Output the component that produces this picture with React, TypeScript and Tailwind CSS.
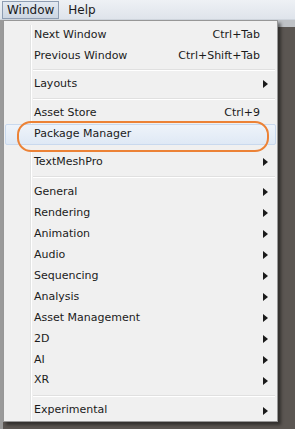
import React from 'react'

type Item =
  | { kind: 'item'; label: string; shortcut?: string; sub?: boolean; active?: boolean; cls?: string }
  | { kind: 'sep'; cls: string }

const items: Item[] = [
  { kind: 'item', label: 'Next Window', shortcut: 'Ctrl+Tab' },
  { kind: 'item', label: 'Previous Window', shortcut: 'Ctrl+Shift+Tab' },
  { kind: 'sep', cls: 'h-[7px]' },
  { kind: 'item', label: 'Layouts', sub: true },
  { kind: 'sep', cls: 'h-[8px]' },
  { kind: 'item', label: 'Asset Store', shortcut: 'Ctrl+9' },
  { kind: 'item', label: 'Package Manager', active: true },
  { kind: 'item', label: 'TextMeshPro', sub: true, cls: 'mt-[7px]' },
  { kind: 'sep', cls: 'h-[9px]' },
  { kind: 'item', label: 'General', sub: true },
  { kind: 'item', label: 'Rendering', sub: true },
  { kind: 'item', label: 'Animation', sub: true },
  { kind: 'item', label: 'Audio', sub: true },
  { kind: 'item', label: 'Sequencing', sub: true },
  { kind: 'item', label: 'Analysis', sub: true },
  { kind: 'item', label: 'Asset Management', sub: true },
  { kind: 'item', label: '2D', sub: true },
  { kind: 'item', label: 'AI', sub: true },
  { kind: 'item', label: 'XR', sub: true },
  { kind: 'sep', cls: 'h-[9px]' },
  { kind: 'item', label: 'Experimental', sub: true },
]

function Arrow() {
  return (
    <svg width="5" height="8" viewBox="0 0 5 8" className="ml-auto mr-[9px] shrink-0">
      <polygon points="0,0 5,4 0,8" fill="#1a1a1a" />
    </svg>
  )
}

function MenuRow({ it }: { it: Item }) {
  if (it.kind === 'sep') {
    return (
      <div className={`flex ${it.cls}`}>
        <div className="w-[27px] shrink-0 border-r border-[#e2e3e3]" />
        <div className="flex-1 flex flex-col justify-center pl-[1px] pr-[2px] border-l border-white">
          <div className="h-px bg-[#e0e0e0]" />
          <div className="h-px bg-white" />
        </div>
      </div>
    )
  }
  if (it.active) {
    return (
      <div className="h-[21px] mx-[1px] flex items-center text-[11px] pl-[28px] bg-gradient-to-b from-[#eef3fa] to-[#dfe9f5] border border-[#c9d9ee] rounded-[2px]">
        {it.label}
      </div>
    )
  }
  return (
    <div className={`h-[21px] flex text-[11px] ${it.cls ?? ''}`}>
      <div className="w-[27px] shrink-0 border-r border-[#e2e3e3]" />
      <div className="flex-1 flex items-center pl-[2px] border-l border-white">
        <span>{it.label}</span>
        {it.shortcut && <span className="ml-auto mr-[17px]">{it.shortcut}</span>}
        {it.sub && <Arrow />}
      </div>
    </div>
  )
}

export default function App() {
  return (
    <div
      className="relative w-[295px] h-[429px] overflow-hidden bg-[#5b5652] text-[#1b1b1b]"
      style={{ fontFamily: '"DejaVu Sans", sans-serif' }}
    >
      {/* menu bar */}
      <div className="h-[20px] bg-gradient-to-b from-[#eef1f5] to-[#dfe4eb] border-b border-[#cfd5dd] flex items-center text-[12px]">
        <div className="ml-[2px] h-[18px] px-[4px] flex items-center border border-[#8e9db2] bg-gradient-to-b from-[#e3e9f1] to-[#cdd6e2]">
          Window
        </div>
        <div className="ml-[9px]">Help</div>
      </div>

      <div className="flex h-[409px]">
        <div className="w-[3px] bg-[#9a9a9a]" />
        <div className="flex-1 flex flex-col">
          <div className="h-[7px] bg-[#bfc2c6]" />
        </div>
      </div>

      {/* dropdown */}
      <div className="absolute left-[3px] top-[20px] w-[275px] h-[402px] bg-[#f0f0f0] border border-[#979797] shadow-[3px_3px_3px_rgba(0,0,0,0.45)] pt-[4px] flex flex-col">
        {items.map((it, i) => (
          <MenuRow key={i} it={it} />
        ))}
        <div className="flex-1 flex">
          <div className="w-[27px] border-r border-[#e2e3e3]" />
          <div className="border-l border-white" />
        </div>
      </div>

      {/* orange annotation */}
      <div className="absolute left-[17px] top-[121px] w-[252px] h-[31px] rounded-[14px] border-2 border-[#ec8236]" />
    </div>
  )
}
